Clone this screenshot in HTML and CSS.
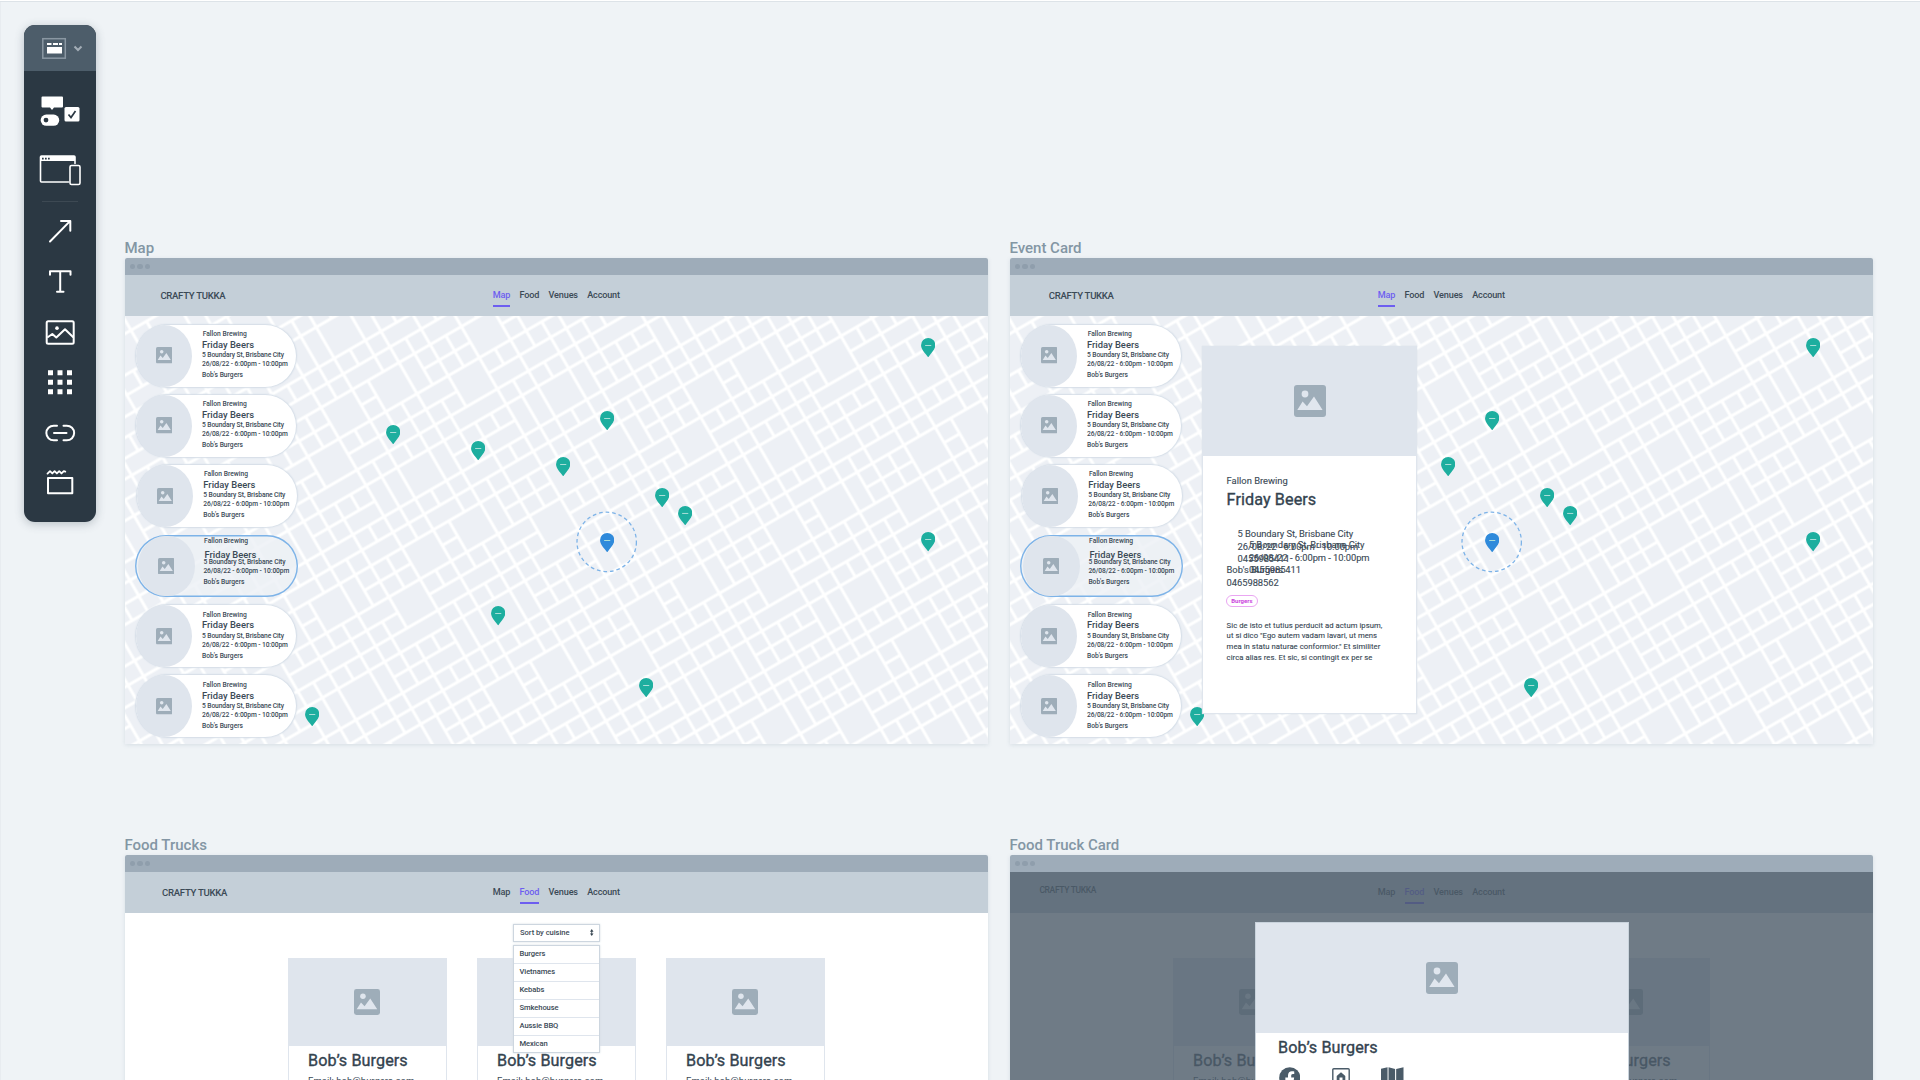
FILE: index.html
```html
<!DOCTYPE html>
<html lang="en">
<head>
<meta charset="utf-8">
<title>Crafty Tukka wireframes</title>
<link rel="stylesheet" href="styles.css">
</head>
<body>
<svg class="defs" width="0" height="0" aria-hidden="true">
  <defs>
    <pattern id="streets" width="162" height="162" patternUnits="userSpaceOnUse" patternTransform="translate(540.3 183.8) rotate(-30)">
      <rect class="road" width="162" height="162"/>
      <g id="blocks" class="block"></g>
    </pattern>
    <symbol id="picture" viewBox="0 0 32 32">
      <path class="pic-bg" d="M3 0h26a3 3 0 0 1 3 3v26a3 3 0 0 1-3 3H3a3 3 0 0 1-3-3V3a3 3 0 0 1 3-3z"/>
      <circle class="pic-fg" cx="11" cy="9" r="3.4"/>
      <path class="pic-fg" d="M3.3 25 8.6 16.6 13 21.3 20 11.6 28.6 25z"/>
    </symbol>
    <symbol id="pin" viewBox="0 0 14 19">
      <path d="M7 0a7 7 0 0 1 7 7c0 4.300-4.200 7.800-7 12C4.200 14.800 0 11.300 0 7a7 7 0 0 1 7-7z"/>
      <path class="pin-dash" d="M4 7.300h6"/>
    </symbol>
  </defs>
</svg>

<nav class="toolbar">
  <svg class="tool-head" viewBox="24 25 72 45.500">
    <rect class="muted-line" x="42.800" y="38.700" width="22.500" height="19.500"/>
    <path class="fill" d="M47 43h4.500v2H47zM53 43h5v2h-5zM59 43h3v2h-3zM47 47h15v6.500H47z"/>
    <path class="muted-line thick" d="M74.500 46.500l3.500 3.500 3.500-3.500"/>
  </svg>
  <svg class="tool-widgets" viewBox="24 71 72 72">
    <path class="fill" d="M42.500 96.500h19.500a1 1 0 0 1 1 1v9a1 1 0 0 1-1 1h-8l-2 2.500-2-2.500h-7.500a1 1 0 0 1-1-1v-9a1 1 0 0 1 1-1z"/>
    <rect class="fill" x="64.500" y="107" width="15" height="14.500" rx="1.500"/>
    <path class="dark-line" d="M68.500 114.500l2.500 3 4.500-6.500"/>
    <rect class="fill" x="40.700" y="114.500" width="18.500" height="11.300" rx="5.600"/>
    <circle class="dark" cx="46" cy="120.100" r="2.400"/>
  </svg>
  <svg class="tool-devices" viewBox="24 142.500 72 58">
    <path class="line" d="M68.500 181.500H41.500q-1 0-1-1V156.500q0-1 1-1H74q1 0 1 1V163"/>
    <path class="fill" d="M40.500 155.500h34.500v5h-34.500z"/>
    <path class="dark" d="M42 157.300h1.700v1.700H42zM45 157.300h1.700v1.700H45zM48 157.300h1.700v1.700H48z"/>
    <rect class="line" x="70" y="165" width="10" height="19" rx="1.500"/>
  </svg>
  <hr class="tool-divider">
  <svg class="tool" viewBox="24 207.500 72 50"><path class="line bold" d="M50 241.800L70 221.500M61 221.300h9.300v9.700"/></svg>
  <svg class="tool" viewBox="24 257.500 72 50"><path class="line bold" d="M50 275v-3.300h20.500V275M60.200 272v20M57 292h6.500"/></svg>
  <svg class="tool" viewBox="24 307 72 50">
    <rect class="line bold" x="46.700" y="321.200" width="27" height="22.500" rx="1.500"/>
    <path class="line bold" d="M48 336.800l4.300-3 4 3.500 8.700-8.200 8 7.700"/>
    <circle class="fill" cx="57" cy="328" r="1.800"/>
  </svg>
  <svg class="tool" viewBox="24 357.500 72 50">
    <path class="fill" d="M48 370.600h5v5h-5zM57.500 370.600h5v5h-5zM67 370.600h5v5h-5zM48 380h5v5h-5zM57.500 380h5v5h-5zM67 380h5v5h-5zM48 389.600h5v5h-5zM57.500 389.600h5v5h-5zM67 389.600h5v5h-5z"/>
  </svg>
  <svg class="tool" viewBox="24 408 72 50"><path class="line bold" d="M57 425.500h-3.300a7.300 7.300 0 0 0 0 14.700H57M63.500 425.500h3.300a7.300 7.300 0 0 1 0 14.700h-3.300M54 432.900h12.500"/></svg>
  <svg class="tool" viewBox="24 458.500 72 50">
    <path class="line zig" d="M47.500 474l2.500-2.500 2.300 2.300 2.300-2.300 2.300 2.300 2.300-2.300 2.300 2.300 2.300-2.300 1.500.5"/>
    <rect class="line bold" x="48" y="478.300" width="24.300" height="15.300"/>
  </svg>
</nav>

<main class="board">
  <section class="screen">
    <h2>Map</h2>
    <div class="frame">
      <div class="chrome"><i></i><i></i><i></i></div>
      <div class="site-nav"><b class="brand">CRAFTY TUKKA</b><span class="links"><a class="on">Map</a><a>Food</a><a>Venues</a><a>Account</a></span></div>
      <div class="map" data-map></div>
    </div>
  </section>

  <section class="screen">
    <h2>Event Card</h2>
    <div class="frame">
      <div class="chrome"><i></i><i></i><i></i></div>
      <div class="site-nav"><b class="brand brand-in">CRAFTY TUKKA</b><span class="links"><a class="on">Map</a><a>Food</a><a>Venues</a><a>Account</a></span></div>
      <div class="map" data-map>
        <article class="event-card">
          <div class="photo"><svg class="pic32"><use href="#picture"/></svg></div>
          <div class="event-body">
            <p class="host">Fallon Brewing</p>
            <h3>Friday Beers</h3>
            <div class="details">
              <p class="bobs">Bob's Burgers<br>0465988562</p>
              <p class="copy-a">5 Boundary St, Brisbane City<br>26/08/22 - 6:00pm - 10:00pm<br>0455985411</p>
              <p class="copy-b">5 Boundary St, Brisbane City<br>26/08/22 - 6:00pm - 10:00pm<br>0455985411</p>
            </div>
            <span class="tag">Burgers</span>
            <p class="blurb">Sic de isto et tutius perducit ad actum ipsum,<br>ut si dico "Ego autem vadam lavari, ut mens<br>mea in statu naturae conformior." Et similiter<br>circa alias res. Et sic, si contingit ex per se</p>
          </div>
        </article>
      </div>
    </div>
  </section>

  <section class="screen">
    <h2>Food Trucks</h2>
    <div class="frame">
      <div class="chrome"><i></i><i></i><i></i></div>
      <div class="site-nav"><b class="brand brand-mid">CRAFTY TUKKA</b><span class="links"><a>Map</a><a class="on">Food</a><a>Venues</a><a>Account</a></span></div>
      <div class="trucks">
        <article class="truck"><div class="photo"><svg class="pic26"><use href="#picture"/></svg></div><h3>Bob’s Burgers</h3><p>Email: bob@burgers.com</p></article>
        <article class="truck"><div class="photo"><svg class="pic26"><use href="#picture"/></svg></div><h3>Bob’s Burgers</h3><p>Email: bob@burgers.com</p></article>
        <article class="truck"><div class="photo"><svg class="pic26"><use href="#picture"/></svg></div><h3>Bob’s Burgers</h3><p>Email: bob@burgers.com</p></article>
        <div class="picker">
          <div class="select"><span>Sort by cuisine</span><svg class="updown" viewBox="0 0 4 8"><path d="M2 0l2 3H0zM2 8L0 5h4zM1.500 2h1v4h-1z"/></svg></div>
          <ul><li>Burgers</li><li>Vietnames</li><li>Kebabs</li><li>Smkehouse</li><li>Aussie BBQ</li><li>Mexican</li></ul>
        </div>
      </div>
    </div>
  </section>

  <section class="screen">
    <h2>Food Truck Card</h2>
    <div class="frame">
      <div class="chrome"><i></i><i></i><i></i></div>
      <div class="shaded">
        <div class="site-nav"><b class="brand brand-small">CRAFTY TUKKA</b><span class="links"><a>Map</a><a class="on">Food</a><a>Venues</a><a>Account</a></span></div>
        <div class="trucks">
          <article class="truck"><div class="photo"><svg class="pic26"><use href="#picture"/></svg></div><h3>Bob’s Burgers</h3><p>Email: bob@burgers.com</p></article>
          <article class="truck"><div class="photo"><svg class="pic26"><use href="#picture"/></svg></div><h3>Bob’s Burgers</h3><p>Email: bob@burgers.com</p></article>
          <article class="truck"><div class="photo"><svg class="pic26"><use href="#picture"/></svg></div><h3>Bob’s Burgers</h3><p>Email: bob@burgers.com</p></article>
        </div>
        <div class="shade">
          <article class="truck-card">
            <div class="photo"><svg class="pic32"><use href="#picture"/></svg></div>
            <h3>Bob’s Burgers</h3>
            <div class="socials">
              <svg class="fb" viewBox="0 0 22 22"><circle cx="11" cy="11" r="10.800"/><path class="cut" d="M9.200 22v-8H6.500v-3.200h2.700V8.600c0-2.800 1.600-4.300 4-4.300 1.200 0 2.400.2 2.400.2v2.700h-1.400c-1.300 0-1.700.8-1.700 1.700v1.900h3l-.5 3.200h-2.500v8z"/></svg>
              <svg class="homebox" viewBox="0 0 18 22"><rect x=".8" y=".8" width="16.400" height="20.400" rx="1"/><path class="solid" d="M9 4.300l4.300 3.800v5h-2.800V9.500h-3v3.600H4.700v-5z"/></svg>
              <svg class="mapicon" viewBox="0 0 23 22"><path d="M0 1.500L6.700 0v19L0 21zM7.700 0l6.700 1.800V21l-6.700-2zM15.500 1.800L23 0v19l-7.500 2z"/></svg>
            </div>
          </article>
        </div>
      </div>
    </div>
  </section>
</main>
<script src="map.js"></script>
</body>
</html>
```

FILE: map.js
```js
// City blocks of one 9 x 9 street tile: column, row, columns wide, rows high.
const UNIT = 18, ROAD = 3.1;
const wide = [
  [6, 0, 2, 2], [4, 4, 2, 2], [7, 4, 2, 2], [2, 6, 2, 2],
  [4, 0, 1, 2], [5, 0, 1, 2], [8, 0, 1, 2], [0, 4, 1, 2],
  [2, 1, 2, 1], [0, 2, 2, 1], [2, 3, 2, 1], [6, 3, 2, 1],
  [0, 6, 2, 1], [4, 7, 2, 1], [6, 7, 2, 1], [1, 8, 3, 1]
];
const taken = new Set();
wide.forEach(([c, r, w, h]) => {
  for (let x = c; x < c + w; x++) for (let y = r; y < r + h; y++) taken.add(x + ',' + y);
});
const blocks = wide.slice();
for (let c = 0; c < 9; c++) for (let r = 0; r < 9; r++) if (!taken.has(c + ',' + r)) blocks.push([c, r, 1, 1]);
document.getElementById('blocks').innerHTML = blocks.map(([c, r, w, h]) =>
  `<rect x="${c * UNIT + ROAD / 2}" y="${r * UNIT + ROAD / 2}" width="${w * UNIT - ROAD}" height="${h * UNIT - ROAD}"/>`).join('');

// Each pin's centre x and top y, inside the map.
const pins = [[267.8, 108.5], [352.7, 124.5], [481.8, 94.6], [437.7, 140.8], [536.7, 171.5], [560.2, 189.5],
  [803, 216.2], [803, 21.8], [373.3, 290.2], [521.3, 361.8], [187, 390.8]];
const kinds = ['', '', 'nudged', 'nudged picked', '', ''];

const streets = '<svg class="streets"><rect width="100%" height="100%" fill="url(#streets)"/>' +
  '<circle class="radius" cx="481.700" cy="225.900" r="29.700"/></svg>';
const pinLayer = pins.map(([x, y]) =>
  `<svg class="pin" style="left:${x - 7.2}px;top:${y}px"><use href="#pin"/></svg>`).join('') +
  '<svg class="pin here" style="left:474.5px;top:216.5px"><use href="#pin"/></svg>';
const list = '<div class="events">' + kinds.map(k =>
  `<article class="event ${k}"><div class="thumb"><svg class="pic16"><use href="#picture"/></svg></div><div class="lines">` +
  '<p class="l1">Fallon Brewing</p><p class="l2">Friday Beers</p><p class="l3">5 Boundary St, Brisbane City</p>' +
  '<p class="l4">26/08/22 - 6:00pm - 10:00pm</p><p class="l5">Bob\'s Burgers</p></div></article>').join('') + '</div>';

document.querySelectorAll('[data-map]').forEach(m => m.insertAdjacentHTML('afterbegin', streets + pinLayer + list));
```

FILE: styles.css
```css
* { box-sizing: border-box; }
html, body { height: 100%; }
body {
  margin: 0;
  display: flex;
  align-items: flex-start;
  overflow: hidden;
  background: #eff3f6;
  box-shadow: inset 0 1px #fff, inset 0 2px #dde3e8, inset 1px 0 #e8ecf0;
  font-family: Roboto, "Liberation Sans", sans-serif;
  color: #3b4a56;
}
h2, h3, p, ul { margin: 0; padding: 0; font-weight: 500; }
svg { display: block; }
.defs { position: absolute; }

/* Toolbar */
.toolbar {
  width: 72px; height: 497px;
  margin: 25px 29px 0 24px;
  flex: none;
  display: flex; flex-direction: column;
  border-radius: 11px;
  overflow: hidden;
  background: #2b3843;
  box-shadow: 0 2px 10px rgba(60, 75, 90, .3);
}
.toolbar svg { width: 72px; flex: none; }
.tool-head { height: 45.5px; background: #4d5d6a; }
.tool-widgets { height: 72px; }
.tool-devices { height: 58px; }
.tool-divider { width: 36px; height: 1px; margin: 0 auto 5px; border: 0; background: #3d4953; flex: none; }
.tool { height: 50.3px; }
.fill { fill: #fff; }
.dark { fill: #2b3843; }
.line { fill: none; stroke: #fff; stroke-width: 1.6; stroke-linecap: round; stroke-linejoin: round; }
.bold { stroke-width: 2; }
.zig { stroke-width: 1.8; }
.dark-line { fill: none; stroke: #2b3843; stroke-width: 1.7; }
.muted-line { fill: none; stroke: #8a97a2; stroke-width: 1.5; }
.thick { stroke: #a3adb6; stroke-width: 2; }

/* Board */
.board {
  height: 1080px;
  overflow: hidden;
  display: grid;
  grid-template-columns: 863px 863px;
  grid-template-rows: 507px 246px;
  row-gap: 90px;
  column-gap: 22px;
  padding: 237px 8px 0 5px;
  margin-left: -5px;
  flex: none;
}
.screen { min-width: 0; }
h2 { height: 21px; font-size: 15px; line-height: 23.6px; color: #8396a4; letter-spacing: -.02px; text-indent: -.5px; }
.frame {
  border-radius: 2px 2px 0 0;
  background: #fff;
  box-shadow: 0 1px 4px rgba(120, 140, 160, .2);
  position: relative;
}
.chrome { height: 17px; display: flex; align-items: center; gap: 2px; padding-left: 5px; background: #9eacb9; border-radius: 2px 2px 0 0; }
.chrome i { width: 5.3px; height: 5.3px; border-radius: 50%; background: #8f9eac; }
.site-nav { height: 41px; background: #c4cfd8; display: flex; align-items: flex-start; padding-left: 35.4px; font-size: 9.6px; line-height: 13px; }
.brand { width: 332.4px; padding-top: 13.5px; font-weight: 500; letter-spacing: -.31px; white-space: nowrap; }
.brand-in { padding-left: 3.4px; }
.brand-mid { padding-left: 1.7px; }
.brand-small { font-size: 8.5px; padding-top: 11.5px; margin-left: -6px; width: 338.4px; letter-spacing: -.34px; }
.links { display: flex; gap: 9.3px; padding-top: 14px; font-size: 9.1px; }
.links a { font-weight: 500; height: 18px; letter-spacing: -.16px; }
.links .on { color: #6d5ef0; border-bottom: 2px solid #6d5ef0; }

.pic-bg { fill: #9eadb9; }
.pic-fg { fill: #e0e6ee; }
.pic16 { width: 16.6px; height: 16.6px; margin-right: .4px; }
.pic26 { width: 26px; height: 26px; }
.pic32 { width: 32px; height: 32px; }
.photo { display: flex; align-items: center; justify-content: center; background: #dfe5ed; }

/* Map */
.map { height: 428px; position: relative; overflow: hidden; }
.road { fill: #fff; }
.block { fill: #edf0f5; }
.streets { position: absolute; inset: 0; width: 100%; height: 100%; }
.radius { fill: none; stroke: #7db3e8; stroke-width: 1.3; stroke-dasharray: 3.7 2.9; }
.pin { position: absolute; width: 14.4px; height: 19.4px; fill: #1dae9f; }
.pin-dash { stroke: #a9ded8; stroke-width: 1; }
.here { fill: #2f8adb; }
.here .pin-dash { stroke: #6badeb; }
.events { position: relative; display: flex; flex-direction: column; gap: 8.2px; padding: 8.5px 0 0 11px; }
.event { width: 159.5px; height: 62px; display: flex; background: #fff; border-radius: 31px; box-shadow: 0 0 1.5px 1px #d4dde7; }
.nudged { margin-left: 1.3px; }
.thumb { width: 56px; height: 62px; border-radius: 28px / 31px; background: #dfe5ed; display: flex; align-items: center; justify-content: center; }
.lines { padding: 4.4px 0 0 10px; white-space: nowrap; font-size: 6.7px; }
.lines p { font-weight: 500; }
.l1 { line-height: 10.8px; text-indent: .7px; }
.l2 { font-size: 9.4px; line-height: 10.8px; }
.l3, .l4 { line-height: 9px; }
.l3 { letter-spacing: -.1px; padding-top: .6px; }
.l4 { letter-spacing: -.1px; }
.l5 { line-height: 12.4px; }
.picked { background: rgba(237, 240, 245, .82); margin-left: -1px; width: 163px; box-shadow: inset 0 0 0 1.4px #7db3e8; }
.picked .thumb { width: 57.5px; height: 60px; margin: 1px 0 0 2.5px; }
.picked .lines { padding: 1px 0 0 8.4px; }
.picked .l2 { margin-top: 3.6px; text-indent: 1px; }
.picked .l3 { margin-top: -4px; }
.picked .l4 { margin-top: .4px; }

/* Event card */
.event-card {
  position: absolute; left: 192px; top: 30px; width: 215px; height: 368px;
  border: 1.5px solid #dfe5ed; background: #fff;
  box-shadow: 0 0 1px #cfd8e1;
}
.event-card .photo { height: 108.5px; }
.event-body { padding: 18.5px 0 0 23.6px; white-space: nowrap; font-size: 9.4px; }
.event-body p { font-weight: 400; -webkit-text-stroke: .12px; }
.host { line-height: 14px; }
h3 { font-size: 16.2px; line-height: 20px; color: #34434f; font-weight: 400; letter-spacing: .08px; -webkit-text-stroke: .35px #34434f; }
.event-body h3 { padding-top: 2px; }
.details { display: grid; height: 74px; margin-top: 18px; line-height: 12.6px; font-size: 9.4px; letter-spacing: -.06px; }
.details p { grid-area: 1 / 1; }
.copy-a { padding-left: 11px; }
.copy-b { padding: 11px 0 0 22.3px; }
.bobs { padding-top: 36px; }
.tag { display: block; width: 32.5px; height: 12px; margin: -7px 0 0 -1px; border: 1px solid #eaa6f2; border-radius: 6px; font-size: 6px; font-weight: 700; line-height: 10.5px; text-align: center; color: #cb45dd; }
.blurb { margin-top: 13.5px; font-size: 7.7px; line-height: 10.8px; letter-spacing: .05px; }

/* Food trucks */
.trucks { height: 188px; position: relative; display: flex; gap: 30.5px; padding: 44.5px 0 0 163px; background: #fff; }
.truck { width: 158.5px; border: 1.5px solid #dfe5ed; background: #fff; height: 240px; }
.truck .photo { height: 87.5px; }
.truck h3, .truck p { padding-left: 19px; white-space: nowrap; }
.truck h3 { padding-top: 5px; }
.truck p { font-size: 9.5px; line-height: 14px; padding-top: 2.5px; font-weight: 400; }
.picker { position: absolute; left: 388px; top: 11px; width: 87px; font-size: 7.6px; font-weight: 500; }
.select { height: 18px; display: flex; justify-content: space-between; align-items: center; padding: 0 5.5px 1px 6px; background: #fff; border: 1px solid #cdd6df; box-shadow: 0 0 2px #d5dde4; letter-spacing: -.05px; }
.updown { width: 3.5px; height: 7px; fill: #34434f; }
.picker ul { list-style: none; margin-top: 2.5px; background: #fff; border: 1px solid #cdd6df; box-shadow: 0 0 2px #d5dde4; letter-spacing: -.1px; }
.picker li { height: 18px; line-height: 15.5px; padding-left: 5.5px; border-bottom: 1px solid #dfe5ed; }
.picker li:last-child { height: 16px; border: 0; }

/* Food truck card */
.shaded { position: relative; overflow: hidden; }
.shade { position: absolute; inset: 0; display: flex; justify-content: center; align-items: flex-start; padding: 50px 0 0 0; background: rgba(77, 93, 106, .81); }
.truck-card { width: 374px; height: 290px; background: #fff; border: 1.5px solid #c9d3dc; flex: none; }
.truck-card .photo { height: 109.5px; }
.truck-card h3 { padding: 5px 0 0 22.5px; }
.socials { display: flex; padding: 9px 0 0 23px; fill: #4a5b68; }
.fb { width: 21.5px; height: 21.5px; margin-right: 31.5px; }
.cut { fill: #fff; }
.homebox { width: 18px; height: 22px; margin: 1px 31.5px 0 0; fill: none; stroke: #4a5b68; stroke-width: 1.4; }
.solid { fill: #4a5b68; stroke: none; }
.mapicon { width: 22.5px; height: 22px; }
```
